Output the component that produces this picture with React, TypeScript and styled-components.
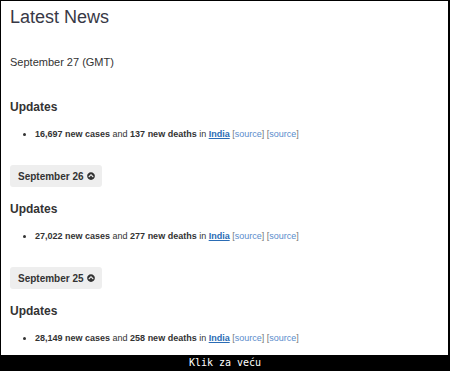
import React, { FC } from "react";
import styled, { createGlobalStyle } from "styled-components";
import { FaChevronCircleUp } from "react-icons/fa";

type Day = {
    label: string;
    cases: string;
    deaths: string;
};

const days: Day[] = [
    { label: "September 27 (GMT)", cases: "16,697", deaths: "137" },
    { label: "September 26", cases: "27,022", deaths: "277" },
    { label: "September 25", cases: "28,149", deaths: "258" },
];

const App: FC = () => {
    return (
        <Frame>
            <GlobalStyle />
            <Panel>
                <Title>Latest News</Title>
                {days.map((day, i) => (
                    <section key={day.label}>
                        {i === 0 ? (
                            <DateLine>{day.label}</DateLine>
                        ) : (
                            <DayButton>
                                {day.label}
                                <FaChevronCircleUp size={8} />
                            </DayButton>
                        )}
                        <UpdatesHeading $gap={i === 0 ? 31 : 15}>Updates</UpdatesHeading>
                        <UpdateList>
                            <li>
                                <b>{day.cases} new cases</b> and <b>{day.deaths} new deaths</b> in{" "}
                                <CountryLink href="#">India</CountryLink>{" "}
                                <Source>
                                    [<a href="#">source</a>]
                                </Source>{" "}
                                <Source>
                                    [<a href="#">source</a>]
                                </Source>
                            </li>
                        </UpdateList>
                    </section>
                ))}
            </Panel>
            <Caption>Klik za veću</Caption>
        </Frame>
    );
};

export default App;

const GlobalStyle = createGlobalStyle`
  body {
    margin: 0;
    background: #000;
  }
`;

const Frame = styled.div`
  width: 450px;
  height: 371px;
  background: #000;
  display: flex;
  flex-direction: column;
  font-family: "Liberation Sans", Arial, sans-serif;
`;

const Panel = styled.div`
  flex: 1;
  margin: 1px 2px 0 1px;
  padding: 5px 9px 0;
  background: #fff;
  overflow: hidden;
  color: #333;
`;

const Title = styled.h1`
  margin: 0;
  font-size: 18px;
  line-height: 22px;
  font-weight: normal;
  color: #383846;
`;

const DateLine = styled.div`
  margin-top: 27px;
  font-size: 11px;
  line-height: 14px;
`;

const DayButton = styled.button`
  display: inline-flex;
  align-items: center;
  gap: 3px;
  height: 22px;
  margin-top: 25px;
  padding: 0 7px 0 8px;
  border: 0;
  border-radius: 3px;
  background: #eeeeee;
  color: #333;
  font-family: inherit;
  font-size: 10px;
  font-weight: bold;
  cursor: pointer;
`;

const UpdatesHeading = styled.h3<{ $gap: number }>`
  margin: ${(p) => p.$gap}px 0 0;
  font-size: 12px;
  line-height: 14px;
  font-weight: bold;
`;

const UpdateList = styled.ul`
  margin: 14px 0 0;
  padding-left: 25px;
  font-size: 9px;
  line-height: 12px;
  b {
    color: #333;
  }
`;

const CountryLink = styled.a`
  color: #2a6cb5;
  font-weight: bold;
  text-decoration: underline;
`;

const Source = styled.span`
  color: #777;
  a {
    color: #5a8ccc;
    text-decoration: none;
  }
`;

const Caption = styled.div`
  height: 16px;
  line-height: 16px;
  text-align: center;
  color: #fff;
  font-family: "DejaVu Sans Mono", "Liberation Mono", monospace;
  font-size: 10px;
`;
